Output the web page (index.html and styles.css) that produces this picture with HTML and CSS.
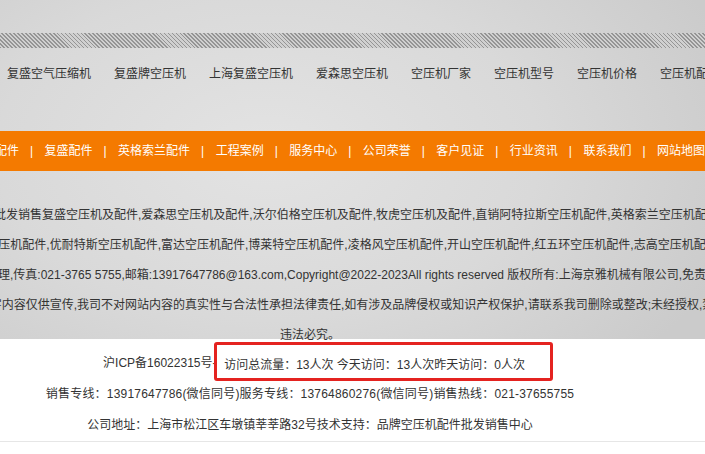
FILE: index.html
```html
<!DOCTYPE html>
<html lang="zh-CN">
<head>
    <meta charset="UTF-8">
    <meta name="viewport" content="width=device-width, initial-scale=1.0">
    <title>上海京雅机械有限公司 - 页脚</title>
    <link rel="stylesheet" href="styles.css">
</head>
<body>
    <div id="top">
        <div class="stripe"></div>

        <ul class="keywords">
            <li>复盛空气压缩机</li>
            <li>复盛牌空压机</li>
            <li>上海复盛空压机</li>
            <li>爱森思空压机</li>
            <li>空压机厂家</li>
            <li>空压机型号</li>
            <li>空压机价格</li>
            <li>空压机配件</li>
        </ul>

        <div class="menu">
            <ul>
                <li>阿特拉斯配件</li><li class="sep">|</li>
                <li>复盛配件</li><li class="sep">|</li>
                <li>英格索兰配件</li><li class="sep">|</li>
                <li>工程案例</li><li class="sep">|</li>
                <li>服务中心</li><li class="sep">|</li>
                <li>公司荣誉</li><li class="sep">|</li>
                <li>客户见证</li><li class="sep">|</li>
                <li>行业资讯</li><li class="sep">|</li>
                <li>联系我们</li><li class="sep">|</li>
                <li>网站地图</li>
            </ul>
        </div>

        <div class="wrap about">
            <p>上海京雅机械有限公司专业批发销售复盛空压机及配件,爱森思空压机及配件,沃尔伯格空压机及配件,牧虎空压机及配件,直销阿特拉斯空压机配件,英格索兰空压机配件,寿力空压</p>
            <p>机配件,复盛螺杆空压机配件,优耐特斯空压机配件,富达空压机配件,博莱特空压机配件,凌格风空压机配件,开山空压机配件,红五环空压机配件,志高空压机配件,</p>
            <p>来电咨询联系人:王经理,传真:021-3765 5755,邮箱:13917647786@163.com,Copyright@2022-2023All rights reserved 版权所有:上海京雅机械有限公司,免责声明:</p>
            <p>本站部分图片及文字内容仅供宣传,我司不对网站内容的真实性与合法性承担法律责任,如有涉及品牌侵权或知识产权保护,请联系我司删除或整改;未经授权,禁止</p>
            <p>违法必究。</p>
        </div>
    </div>

    <div id="footer">
        <div class="wrap">
            <p class="icp">沪ICP备16022315号-6<span class="visits">访问总流量：13人次 今天访问：13人次昨天访问：0人次</span></p>
            <p class="phones">销售专线：13917647786(微信同号)服务专线：13764860276(微信同号)销售热线：021-37655755</p>
            <p>公司地址：上海市松江区车墩镇莘莘路32号技术支持：品牌空压机配件批发销售中心</p>
        </div>
    </div>
</body>
</html>
```

FILE: styles.css
```css
body {
    margin: 0;
    font-family: "Liberation Sans", "Noto Sans CJK SC", sans-serif;
    font-size: 12px;
    color: #333;
    background-color: #fff;
    overflow: hidden;
}
ul {
    list-style: none;
    margin: 0;
    padding: 0;
}
.wrap {
    width: 620px;
}
#top {
    height: 339px;
    padding-top: 33px;
    box-sizing: border-box;
    background: radial-gradient(ellipse 70% 90% at 38% 45%, #e3e3e3 0%, #d9d9d9 55%, #cbcbcb 100%);
}
.stripe {
    height: 15px;
    background: repeating-linear-gradient(45deg, #959595 0 1.2px, #d0d0d0 1.2px 2.8px);
}
.keywords {
    display: flex;
    gap: 23px;
    height: 52px;
    line-height: 52px;
    padding-left: 7px;
    white-space: nowrap;
    color: #333;
}
.menu {
    margin-top: 31px;
    height: 40px;
    line-height: 40px;
    background-color: #f47a00;
    color: #fff;
    overflow: hidden;
}
.menu ul {
    display: flex;
    margin-left: -53px;
    white-space: nowrap;
}
.menu .sep {
    width: 4px;
    margin: 0 11px;
}
.about {
    margin-top: 29px;
    color: #333;
}
.about p {
    display: flex;
    justify-content: center;
    margin: 0;
    height: 30px;
    line-height: 31px;
    white-space: nowrap;
}
#footer {
    padding-top: 9px;
    border-bottom: 1px solid #e6e6e6;
    text-align: center;
    color: #333;
}
#footer p {
    margin: 0;
    line-height: 31px;
    white-space: nowrap;
}
#footer .icp {
    padding-left: 36px;
}
#footer .phones {
    letter-spacing: 0.2px;
}
.visits {
    display: inline-block;
    position: relative;
    top: -2px;
    vertical-align: middle;
    margin: -8px 0 -8px -9px;
    padding: 0 25px 0 7px;
    height: 33px;
    line-height: 40px;
    border: 3px solid #e42320;
    border-radius: 3px;
    background-color: #fff;
}
```
